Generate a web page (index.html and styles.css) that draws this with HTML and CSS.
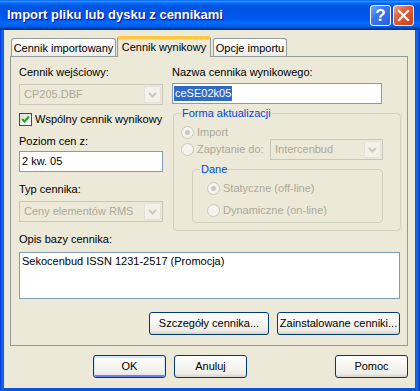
FILE: index.html
```html
<!DOCTYPE html>
<html lang="pl">
<head>
    <meta charset="UTF-8">
    <title>Import pliku lub dysku z cennikami</title>
    <link rel="stylesheet" href="styles.css">
</head>
<body>
    <div class="window">
        <div class="titlebar">
            <span class="title">Import pliku lub dysku z cennikami</span>
            <div class="caption-btns">
                <div class="cap help">?</div>
                <div class="cap close">
                    <svg width="13" height="13" viewBox="0 0 13 13"><path d="M2 2 L11 11 M11 2 L2 11" stroke="#fff" stroke-width="2.2" stroke-linecap="square"/></svg>
                </div>
            </div>
        </div>
        <div class="client">
            <div class="tabs">
                <div class="tab tab-1">Cennik importowany</div>
                <div class="tab tab-2 active">Cennik wynikowy</div>
                <div class="tab tab-3">Opcje importu</div>
            </div>
            <div class="panel">
                <div class="cols">
                    <div class="col">
                        <div class="label">Cennik wejściowy:</div>
                        <div class="combo disabled combo-top">
                            <span class="combo-text">CP205.DBF</span>
                            <span class="drop"><svg width="9" height="6" viewBox="0 0 9 6"><path d="M1 1 L4.5 4.5 L8 1" fill="none" stroke="#c9c7ba" stroke-width="2"/></svg></span>
                        </div>
                        <div class="check-row">
                            <span class="checkbox"><svg width="9" height="9" viewBox="0 0 9 9"><path d="M1 4 L3.5 6.5 L8 1.5" fill="none" stroke="#21a121" stroke-width="2"/></svg></span>
                            <span>Wspólny cennik wynikowy</span>
                        </div>
                        <div class="label label-gap">Poziom cen z:</div>
                        <div class="edit edit-left">2 kw. 05</div>
                        <div class="label label-gap2">Typ cennika:</div>
                        <div class="combo disabled combo-top">
                            <span class="combo-text">Ceny elementów RMS</span>
                            <span class="drop"><svg width="9" height="6" viewBox="0 0 9 6"><path d="M1 1 L4.5 4.5 L8 1" fill="none" stroke="#c9c7ba" stroke-width="2"/></svg></span>
                        </div>
                    </div>
                    <div class="col">
                        <div class="label">Nazwa cennika wynikowego:</div>
                        <div class="edit edit-name"><span class="selected">ceSE02k05</span></div>
                        <fieldset class="group">
                            <legend>Forma aktualizacji</legend>
                            <div class="radio-row first">
                                <span class="radio checked"></span>
                                <span class="dim">Import</span>
                            </div>
                            <div class="radio-row query">
                                <span class="radio"></span>
                                <span class="dim">Zapytanie do:</span>
                                <div class="combo disabled combo-query">
                                    <span class="combo-text">Intercenbud</span>
                                    <span class="drop"><svg width="9" height="6" viewBox="0 0 9 6"><path d="M1 1 L4.5 4.5 L8 1" fill="none" stroke="#c9c7ba" stroke-width="2"/></svg></span>
                                </div>
                            </div>
                            <fieldset class="group inner">
                                <legend>Dane</legend>
                                <div class="radio-row first">
                                    <span class="radio checked"></span>
                                    <span class="dim">Statyczne (off-line)</span>
                                </div>
                                <div class="radio-row second">
                                    <span class="radio"></span>
                                    <span class="dim">Dynamiczne (on-line)</span>
                                </div>
                            </fieldset>
                        </fieldset>
                    </div>
                </div>
                <div class="label label-memo">Opis bazy cennika:</div>
                <div class="memo">Sekocenbud ISSN 1231-2517 (Promocja)</div>
                <div class="panel-buttons">
                    <div class="btn btn-details">Szczegóły cennika...</div>
                    <div class="btn btn-installed">Zainstalowane cenniki...</div>
                </div>
            </div>
            <div class="dialog-buttons">
                <div class="btn btn-small default">OK</div>
                <div class="btn btn-small">Anuluj</div>
                <div class="btn btn-small btn-help">Pomoc</div>
            </div>
        </div>
    </div>
</body>
</html>
```
FILE: styles.css
```css
* {
    box-sizing: border-box;
}
body {
    margin: 0;
    font-family: "Liberation Sans", Arial, sans-serif;
    font-size: 11px;
    line-height: 13px;
    color: #000;
    background: #fff;
}
.window {
    width: 420px;
    height: 391px;
    display: flex;
    flex-direction: column;
    background: linear-gradient(to right, #0831d9 0, #166aee 2px, #0855dd 4px, #0855dd 415px, #166aee 417px, #0831d9 420px);
}
.titlebar {
    height: 30px;
    display: flex;
    align-items: center;
    padding: 0 6px 0 7px;
    background: linear-gradient(to bottom, #0058ee 0%, #3593ff 4%, #288eff 6%, #127dff 8%, #036ffc 10%, #0262ee 14%, #0057e5 20%, #0054e3 24%, #0055eb 56%, #005bf5 66%, #026afe 76%, #0062ef 86%, #0052d6 92%, #0040ab 94%, #003092 100%);
}
.title {
    flex: 1;
    color: #fff;
    font-weight: bold;
    font-size: 13px;
    text-shadow: 1px 1px #0f1089;
    padding-bottom: 1px;
}
.caption-btns {
    display: flex;
    gap: 2px;
}
.cap {
    width: 21px;
    height: 21px;
    border: 1px solid #fff;
    border-radius: 3px;
    display: flex;
    justify-content: center;
    align-items: center;
    color: #fff;
}
.help {
    background: linear-gradient(135deg, #78a5fb 0%, #3c76ef 40%, #2560e2 100%);
    font-size: 17px;
    font-weight: bold;
}
.close {
    background: linear-gradient(135deg, #f0a48a 0%, #e25d38 40%, #c83f19 100%);
}
.client {
    flex: 1;
    margin: 0 5px 3px 4px;
    background: #ece9d8;
    padding: 6px 7px 0 6px;
    display: flex;
    flex-direction: column;
}
.tabs {
    display: flex;
    align-items: flex-end;
    height: 21px;
    margin-bottom: -1px;
    position: relative;
    z-index: 1;
}
.tab {
    height: 18px;
    margin-bottom: 1px;
    border: 1px solid #919b9c;
    border-bottom: none;
    border-radius: 3px 3px 0 0;
    background: linear-gradient(#fefefe, #f6f5f0 70%, #ecebe5);
    text-align: center;
    padding-top: 3px;
}
.tab-1 {
    width: 105px;
    margin-left: 1px;
}
.tab-2 {
    width: 94px;
    margin-left: 1px;
}
.tab-3 {
    width: 74px;
    margin-left: 2px;
}
.tab.active {
    height: 21px;
    margin-bottom: 0;
    border-top: 3px solid #ffc83c;
    box-shadow: inset 0 1px 0 #fbd977;
    background: #ece9d8;
    padding-top: 2px;
    border-radius: 3px 3px 0 0;
}
.panel {
    border: 1px solid #919b9c;
    background: #ece9d8;
    padding: 9px 6px 10px 8px;
}
.cols {
    display: grid;
    grid-template-columns: 144px 1fr;
    column-gap: 9px;
}
.col {
    display: flex;
    flex-direction: column;
}
.label {
    height: 13px;
    white-space: nowrap;
}
.label-gap {
    margin-top: 9px;
}
.label-gap2 {
    margin-top: 11px;
}
.combo {
    height: 21px;
    border: 1px solid #c9c7ba;
    display: flex;
    align-items: center;
    background: #ece9d8;
    padding: 1px;
}
.combo-top {
    margin-top: 5px;
}
.combo-text {
    flex: 1;
    padding-left: 3px;
    color: #aca899;
    white-space: nowrap;
    overflow: hidden;
}
.drop {
    width: 17px;
    height: 17px;
    background: #f2f1ea;
    border: 1px solid #e3e1d6;
    border-radius: 1px;
    display: flex;
    justify-content: center;
    align-items: center;
}
.check-row {
    display: flex;
    align-items: center;
    gap: 3px;
    margin-top: 8px;
    height: 13px;
}
.checkbox {
    width: 13px;
    height: 13px;
    border: 1px solid #1c5180;
    background: linear-gradient(135deg, #dcdcd7, #fff);
    display: flex;
    justify-content: center;
    align-items: center;
}
.edit {
    height: 21px;
    border: 1px solid #7f9db9;
    background: #fff;
    display: flex;
    align-items: center;
}
.edit-left {
    margin-top: 3px;
    padding-left: 2px;
}
.edit-name {
    margin-top: 4px;
    width: 210px;
    padding-left: 1px;
}
.selected {
    background: #316ac5;
    color: #fff;
    padding: 1px 1px;
}
.group {
    margin: 3px 0 0 1px;
    border: 1px solid #d0d0bf;
    border-radius: 4px;
    padding: 0 17px 7px 7px;
    min-width: 0;
}
.group legend {
    color: #0046d5;
    padding: 0 1px;
    line-height: 13px;
}
.radio-row {
    display: flex;
    align-items: center;
    gap: 3px;
    height: 13px;
}
.radio-row.first {
    margin-top: 6px;
}
.radio-row.query {
    height: 21px;
}
.radio-row.second {
    margin-top: 9px;
}
.radio {
    width: 13px;
    height: 13px;
    border: 1px solid #cac8bb;
    border-radius: 50%;
    background: #f4f3ee;
    display: flex;
    justify-content: center;
    align-items: center;
}
.radio.checked::after {
    content: "";
    width: 5px;
    height: 5px;
    border-radius: 50%;
    background: #cac8bb;
}
.dim {
    color: #aca899;
    white-space: nowrap;
}
.combo-query {
    margin-left: auto;
    width: 113px;
}
.group.inner {
    margin: 3px 0 0 11px;
    padding: 0 0 5px 14px;
}
.group.inner legend {
    margin-left: -7px;
}
.label-memo {
    margin-top: 2px;
}
.memo {
    margin-top: 6px;
    margin-right: 1px;
    height: 47px;
    border: 1px solid #7f9db9;
    background: #fff;
    padding: 2px 2px;
}
.panel-buttons {
    display: flex;
    justify-content: flex-end;
    gap: 8px;
    margin-top: 13px;
    padding-right: 1px;
}
.btn {
    height: 23px;
    border: 1px solid #003c74;
    border-radius: 3px;
    background: linear-gradient(#ffffff, #f4f3ee 60%, #ecebe6 85%, #d6d0c5);
    display: flex;
    justify-content: center;
    align-items: center;
    white-space: nowrap;
}
.btn-details {
    width: 120px;
}
.btn-installed {
    width: 123px;
}
.dialog-buttons {
    display: flex;
    gap: 8px;
    margin-top: 9px;
    padding-left: 83px;
}
.btn-small {
    width: 73px;
}
.btn.default {
    box-shadow: inset 0 1px 0 1px #cee7ff, inset 0 -1px 0 1px #6982ee;
}
.btn-help {
    margin-left: auto;
}
```
